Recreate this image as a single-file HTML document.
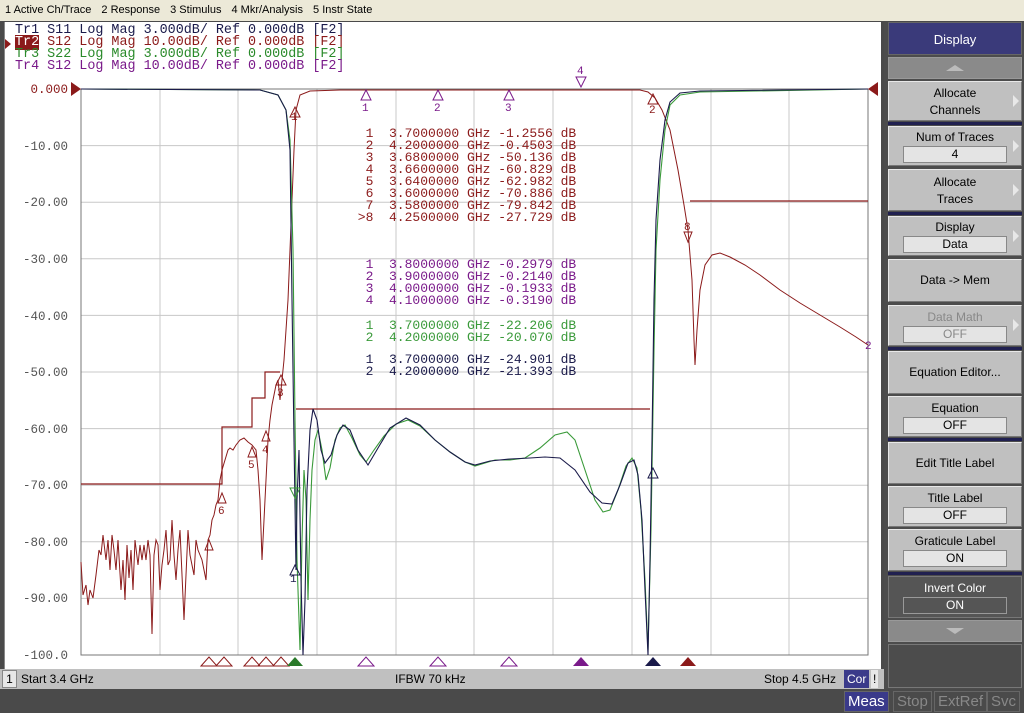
<!DOCTYPE html>
<html><head><meta charset="utf-8"><style>
*{margin:0;padding:0;box-sizing:border-box}
body{width:1024px;height:713px;overflow:hidden;background:#4a4a4a;font-family:"Liberation Sans",sans-serif;position:relative}
.abs{position:absolute}
#menu{left:0;top:0;width:1024px;height:21px;background:#ece9d8;font-size:11px;color:#000;line-height:20px;padding-left:5px}
#menu span{margin-right:10px}
#plot{left:4px;top:22px;width:877px;height:647px;background:#fff;border-left:1px solid #888}
.mono{font-family:"Liberation Mono",monospace;font-size:13.4px;line-height:12px;white-space:pre}
#status{left:0;top:669px;width:884px;height:20px;background:#c0c0c0;font-size:12px;line-height:20px}
#rp{left:884px;top:22px;width:140px;height:667px;background:#4c4c4c}
.btn{position:absolute;left:4px;width:134px;background:#c0c0c0;border:1px solid #e8e8e8;border-right-color:#777;border-bottom-color:#777;font-size:12px;text-align:center;color:#000}
.box{margin:2px auto 0;width:104px;height:17px;background:#e4e4e4;border:1px solid #888;line-height:15px}
.sep{position:absolute;left:4px;width:134px;height:3px;background:#202050}
.arr{position:absolute;right:2px;width:0;height:0;border-top:6px solid transparent;border-bottom:6px solid transparent;border-left:6px solid #e8e8e8}
#bot span{position:absolute;top:691px;height:21px;font-size:15px;line-height:20px;padding:0 3px;border:1px solid #666}
svg text{white-space:pre}
</style></head><body>
<div id="menu" class="abs"><span>1 Active Ch/Trace</span><span>2 Response</span><span>3 Stimulus</span><span>4 Mkr/Analysis</span><span>5 Instr State</span></div>
<div id="plot" class="abs"></div>
<div class="abs mono" style="left:15px;top:25px;color:#1a1a4a">Tr1 S11 Log Mag 3.000dB/ Ref 0.000dB [F2]</div>
<div class="abs mono" style="left:15px;top:37px;color:#8b1a1a"><span style="background:#8b1a1a;color:#fff">Tr2</span> S12 Log Mag 10.00dB/ Ref 0.000dB [F2]</div>
<div class="abs mono" style="left:15px;top:49px;color:#2a8a2a">Tr3 S22 Log Mag 3.000dB/ Ref 0.000dB [F2]</div>
<div class="abs mono" style="left:15px;top:61px;color:#7a1a8a">Tr4 S12 Log Mag 10.00dB/ Ref 0.000dB [F2]</div>
<div class="abs" style="left:5px;top:39px;width:0;height:0;border-top:5px solid transparent;border-bottom:5px solid transparent;border-left:6px solid #8b1a1a"></div>
<svg class="abs" style="left:0;top:0" width="884" height="669" font-family="Liberation Mono,monospace" font-size="13">
<g stroke="#c8c8c8" stroke-width="1">
<path d="M160 89V655M238 89V655M317 89V655M396 89V655M474 89V655M553 89V655M632 89V655M711 89V655M789 89V655"/>
<path d="M81 145.6H868M81 202.2H868M81 258.8H868M81 315.4H868M81 372H868M81 428.6H868M81 485.2H868M81 541.8H868M81 598.4H868"/>
</g>
<rect x="81" y="89" width="787" height="566" fill="none" stroke="#777"/>
<g fill="#555" text-anchor="end" font-size="12.5">
<text x="68" y="93" fill="#8b1a1a">0.000</text><text x="68" y="150">-10.00</text><text x="68" y="206">-20.00</text><text x="68" y="263">-30.00</text><text x="68" y="320">-40.00</text><text x="68" y="376">-50.00</text><text x="68" y="433">-60.00</text><text x="68" y="489">-70.00</text><text x="68" y="546">-80.00</text><text x="68" y="602">-90.00</text><text x="68" y="659">-100.0</text>
</g>
<path d="M71 82L81 89L71 96Z" fill="#8b1a1a"/><path d="M878 82L868 89L878 96Z" fill="#8b1a1a"/>
<path d="M81 484H222V427H252V398H265V372H280M296 409H650M690 201H868" stroke="#8b1a1a" fill="none" stroke-width="1.2"/>
<path d="M81 562L83 595L86 585L88 605L90 590L93 598L96 575L99 550L101 555L103 535L106 560L108 540L110 570L112 535L114 550L116 570L118 540L121 590L123 560L125 600L127 545L129 578L131 550L133 590L135 540L138 565L140 545L142 560L144 545L146 560L148 540L150 555L152 634L154 555L156 540L158 545L160 590L162 565L164 550L166 530L168 565L170 560L172 520L174 555L176 580L178 550L180 530L182 575L184 620L186 575L188 530L190 555L192 565L194 575L196 540L198 550L200 555L202 560L204 570L206 580L208 540L210 535L212 520L214 515L216 505L218 500L220 480L222 470L225 460L228 450L230 448L233 450L236 445L240 440L244 438L248 442L252 445L256 450L258 470L260 500L262 560L264 520L266 480L268 440L270 420L272 405L274 395L276 385L278 380L280 400L282 380L284 360L286 330L288 300L290 250L292 200L294 150L296 110L300 95L310 91L340 90L640 90L648 92L655 98L662 110L670 130L678 170L684 205L688 230L692 280L694 340L695 365L697 330L700 290L705 265L712 255L720 253L730 257L745 265L760 275L780 290L800 303L820 315L840 327L856 337L868 345" stroke="#8b1a1a" fill="none" stroke-width="1"/>
<path d="M81 89L260 90L278 95L286 110L290 140L293 250L295 420L297 560L300 650L302 540L304 470L306 500L308 600L310 520L312 470L315 440L318 430L322 450L326 480L330 468L335 440L340 428L345 425L352 438L360 455L366 462L374 450L384 436L396 424L408 420L420 426L435 440L450 452L465 462L475 466L485 463L495 460L510 460L525 458L540 448L555 435L567 432L575 440L585 470L595 500L603 512L610 510L618 490L626 466L632 458L637 468L641 510L645 580L648 650L651 530L654 350L656 250L660 180L665 130L670 105L680 95L700 92L868 89" stroke="#3a9a3a" fill="none" stroke-width="1.1"/>
<path d="M81 89L260 90L278 95L286 110L290 150L292 300L294 440L296 570L297 500L299 450L301 580L303 655L305 600L307 490L310 430L313 409L317 420L321 450L325 463L331 455L337 435L343 425L350 430L358 450L368 465L378 448L390 428L406 418L420 425L435 440L450 452L465 462L475 465L490 461L510 459L530 458L545 457L560 458L575 470L590 492L602 503L612 504L620 485L628 463L634 460L638 475L642 520L645 590L648 655L650 560L652 440L654 300L656 220L660 160L665 120L670 102L680 93L700 91L868 89" stroke="#1a1a4a" fill="none" stroke-width="1.1"/>
<g fill="none" stroke="#8b1a1a">
<path d="M290 117L295 107L300 117Z"/><path d="M648 104L653 94L658 104Z"/><path d="M684 232L688 242L692 232Z"/><path d="M276 385L281 375L286 385Z"/><path d="M262 441L266 431L270 441Z"/><path d="M248 457L252 447L256 457Z"/><path d="M218 503L222 493L226 503Z"/><path d="M205 550L209 540L213 550Z"/>
</g>
<g fill="#8b1a1a" font-size="11"><text x="291" y="120">1</text><text x="649" y="113">2</text><text x="684" y="230">8</text><text x="277" y="396">3</text><text x="262" y="453">4</text><text x="248" y="468">5</text><text x="218" y="514">6</text></g>
<g fill="none" stroke="#7a1a8a"><path d="M361 100L366 90L371 100Z"/><path d="M433 100L438 90L443 100Z"/><path d="M504 100L509 90L514 100Z"/><path d="M576 77L581 87L586 77Z"/></g>
<g fill="#7a1a8a" font-size="11"><text x="362" y="111">1</text><text x="434" y="111">2</text><text x="505" y="111">3</text><text x="577" y="74">4</text><text x="865" y="349">2</text></g>
<g fill="none" stroke="#1a1a4a"><path d="M290 575L295 565L300 575Z"/><path d="M648 478L653 468L658 478Z"/></g>
<text x="290" y="582" fill="#1a1a4a" font-size="11">1</text>
<path d="M290 488L295 498L300 488Z" fill="none" stroke="#3a9a3a"/>
<g font-size="13">
<g fill="#8b1a1a"><text x="350" y="137">  1  3.7000000 GHz -1.2556 dB</text><text x="350" y="149">  2  4.2000000 GHz -0.4503 dB</text><text x="350" y="161">  3  3.6800000 GHz -50.136 dB</text><text x="350" y="173">  4  3.6600000 GHz -60.829 dB</text><text x="350" y="185">  5  3.6400000 GHz -62.982 dB</text><text x="350" y="197">  6  3.6000000 GHz -70.886 dB</text><text x="350" y="209">  7  3.5800000 GHz -79.842 dB</text><text x="350" y="221"> &gt;8  4.2500000 GHz -27.729 dB</text></g>
<g fill="#7a1a8a"><text x="350" y="268">  1  3.8000000 GHz -0.2979 dB</text><text x="350" y="280">  2  3.9000000 GHz -0.2140 dB</text><text x="350" y="292">  3  4.0000000 GHz -0.1933 dB</text><text x="350" y="304">  4  4.1000000 GHz -0.3190 dB</text></g>
<g fill="#3a9a3a"><text x="350" y="329">  1  3.7000000 GHz -22.206 dB</text><text x="350" y="341">  2  4.2000000 GHz -20.070 dB</text></g>
<g fill="#1a1a4a"><text x="350" y="363">  1  3.7000000 GHz -24.901 dB</text><text x="350" y="375">  2  4.2000000 GHz -21.393 dB</text></g>
</g>
<g fill="none" stroke="#8b1a1a"><path d="M201 666L209 657L217 666ZM216 666L224 657L232 666ZM244 666L252 657L260 666ZM258 666L266 657L274 666ZM273 666L281 657L289 666Z"/></g>
<path d="M287 666L295 657L303 666Z" fill="#2a7a2a"/>
<g fill="none" stroke="#7a1a8a"><path d="M358 666L366 657L374 666ZM430 666L438 657L446 666ZM501 666L509 657L517 666Z"/></g>
<path d="M573 666L581 657L589 666Z" fill="#7a1a8a"/><path d="M645 666L653 657L661 666Z" fill="#1a1a4a"/><path d="M680 666L688 657L696 666Z" fill="#8b1a1a"/>
</svg>
<div id="status" class="abs">
<span class="abs" style="left:2px;top:1px;width:15px;height:18px;background:#e8e8e8;border:1px solid #888;line-height:16px;text-align:center">1</span>
<span class="abs" style="left:21px">Start 3.4 GHz</span>
<span class="abs" style="left:395px">IFBW 70 kHz</span>
<span class="abs" style="left:764px">Stop 4.5 GHz</span>
<span class="abs" style="left:844px;top:1px;height:18px;line-height:18px;background:#3a3a8a;color:#fff;padding:0 3px">Cor</span>
<span class="abs" style="left:871px;top:1px;height:18px;line-height:18px;background:#e8e8e8;padding:0 2px">!</span>
</div>
<div id="rp" class="abs">
<div class="btn" style="top:0;height:33px;background:#3a3a7a;color:#fff;line-height:33px;font-size:13px;border-color:#666">Display</div>
<div class="btn" style="top:35px;height:22px;background:#8a8a8a;border-color:#999"><div style="margin:7px auto 0;width:0;height:0;border-left:9px solid transparent;border-right:9px solid transparent;border-bottom:6px solid #bbb"></div></div>
<div class="btn" style="top:59px;height:40px;line-height:17px;padding-top:3px">Allocate<br>Channels<div class="arr" style="top:13px"></div></div>
<div class="sep" style="top:100px"></div>
<div class="btn" style="top:104px;height:40px;padding-top:3px">Num of Traces<div class="box">4</div><div class="arr" style="top:13px"></div></div>
<div class="btn" style="top:147px;height:42px;line-height:17px;padding-top:4px">Allocate<br>Traces<div class="arr" style="top:14px"></div></div>
<div class="sep" style="top:190px"></div>
<div class="btn" style="top:194px;height:40px;padding-top:3px">Display<div class="box">Data</div><div class="arr" style="top:13px"></div></div>
<div class="btn" style="top:237px;height:43px;line-height:41px">Data -&gt; Mem</div>
<div class="btn" style="top:283px;height:41px;padding-top:4px;color:#888">Data Math<div class="box">OFF</div><div class="arr" style="top:13px"></div></div>
<div class="sep" style="top:325px"></div>
<div class="btn" style="top:329px;height:43px;line-height:41px">Equation Editor...</div>
<div class="btn" style="top:374px;height:41px;padding-top:4px">Equation<div class="box">OFF</div></div>
<div class="sep" style="top:416px"></div>
<div class="btn" style="top:420px;height:42px;line-height:40px">Edit Title Label</div>
<div class="btn" style="top:464px;height:41px;padding-top:4px">Title Label<div class="box">OFF</div></div>
<div class="btn" style="top:507px;height:42px;padding-top:4px">Graticule Label<div class="box">ON</div></div>
<div class="sep" style="top:550px"></div>
<div class="btn" style="top:554px;height:42px;padding-top:4px;background:#555;color:#fff;border-color:#777">Invert Color<div class="box" style="background:#555;border-color:#999">ON</div></div>
<div class="btn" style="top:598px;height:22px;background:#8a8a8a;border-color:#999"><div style="margin:7px auto 0;width:0;height:0;border-left:9px solid transparent;border-right:9px solid transparent;border-top:6px solid #bbb"></div></div>
<div class="btn" style="top:622px;height:44px;background:#4c4c4c;border-color:#777"></div>
</div>
<div id="bot">
<span style="left:844px;background:#3a3a8a;color:#fff">Meas</span>
<span style="left:893px;color:#888">Stop</span>
<span style="left:934px;color:#888">ExtRef</span>
<span style="left:987px;color:#888">Svc</span>
</div>
</body></html>
